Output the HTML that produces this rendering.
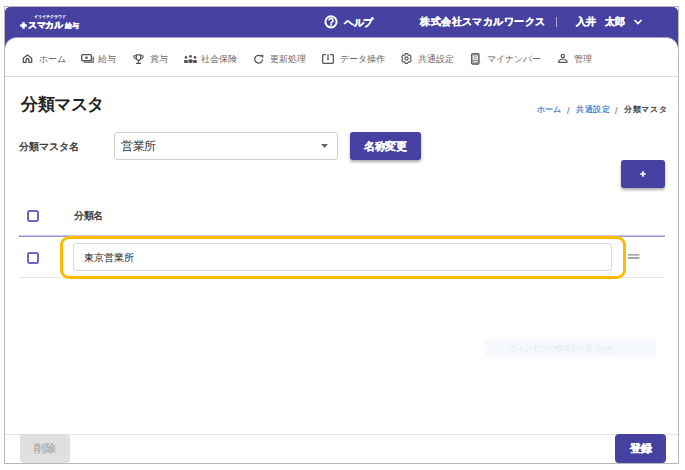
<!DOCTYPE html>
<html><head><meta charset="utf-8">
<style>
*{margin:0;padding:0;box-sizing:border-box;}
html,body{width:685px;height:470px;background:#fff;overflow:hidden;font-family:"Liberation Sans",sans-serif;position:relative;}
.a{position:absolute;}
i{font-style:normal;display:inline-block;width:calc(1em + var(--ls,0px));text-align:center;}
.t{position:absolute;white-space:nowrap;line-height:1;}
#frame{left:4px;top:6px;width:675px;height:458px;border:1px solid #b9b9b9;}
#hdr{left:5px;top:7px;width:673px;height:44px;background:#4741a1;border-radius:5px 5px 0 0;}
#body{left:5px;top:37px;width:673px;height:426px;background:#fff;border-radius:12px 12px 0 0;border-top:1px solid #a3a0d0;}
.nav{color:#666;font-size:9px;}

.nav svg{position:absolute;}
.pbtn{background:#4741a1;border-radius:3px;color:#fff;font-weight:bold;}
.cb{width:12px;height:12px;border:2px solid #6e68bf;border-radius:2.5px;}
</style></head>
<body>
<div id="hdr" class="a"></div>
<div id="body" class="a"></div>

<!-- header content -->
<div class="t" style="left:34px;top:15px;font-size:4px;color:#fff;-webkit-text-stroke:0.2px #fff;"><i>イ</i><i>リ</i><i>イ</i><i>チ</i><i>ク</i><i>ラ</i><i>ウ</i><i>ド</i></div>
<svg class="a" style="left:19.5px;top:22px" width="7" height="7" viewBox="0 0 7 7"><path d="M3.5 0.2v6.6M0.2 3.5h6.6" stroke="#fff" stroke-width="2.6"/></svg>
<div class="t" style="left:28px;top:21px;font-size:8.6px;color:#fff;font-weight:bold;--ls:0.1px;-webkit-text-stroke:0.4px #fff;"><i>ス</i><i>マ</i><i>カ</i><i>ル</i></div>
<div class="t" style="left:64.5px;top:21.5px;font-size:7.4px;color:#fff;font-weight:bold;-webkit-text-stroke:0.25px #fff;"><i>給</i><i>与</i></div>

<svg class="a" style="left:324px;top:15px" width="14" height="14" viewBox="0 0 14 14"><circle cx="7" cy="6.8" r="5.6" fill="none" stroke="#fff" stroke-width="2"/><path d="M5 5.4a2 2 0 1 1 2.8 1.8c-.6.3-.8.6-.8 1.1v.5" fill="none" stroke="#fff" stroke-width="1.6"/><circle cx="7" cy="10" r=".95" fill="#fff"/></svg>
<div class="t" style="left:344px;top:17.5px;font-size:9.5px;color:#fff;font-weight:bold;-webkit-text-stroke:0.3px #fff;"><i>ヘ</i><i>ル</i><i>プ</i></div>
<div class="t" style="left:420px;top:17px;font-size:10px;--ls:0.45px;-webkit-text-stroke:0.3px #fff;color:#fff;font-weight:bold;"><i>株</i><i>式</i><i>会</i><i>社</i><i>ス</i><i>マ</i><i>カ</i><i>ル</i><i>ワ</i><i>ー</i><i>ク</i><i>ス</i></div>
<div class="a" style="left:556px;top:17px;width:1px;height:10px;background:#a9a6d6;"></div>
<div class="t" style="left:575.5px;top:17px;font-size:10px;color:#fff;font-weight:bold;-webkit-text-stroke:0.3px #fff;"><i>入</i><i>井</i></div>
<div class="t" style="left:605px;top:17px;font-size:10px;color:#fff;font-weight:bold;-webkit-text-stroke:0.3px #fff;"><i>太</i><i>郎</i></div>
<svg class="a" style="left:633px;top:18px" width="10" height="8" viewBox="0 0 10 8"><path d="M1.5 2l3.5 3.5L8.5 2" fill="none" stroke="#fff" stroke-width="1.6"/></svg>

<!-- nav -->
<div class="nav">
<svg style="left:22px;top:54px" width="11" height="9" viewBox="0 0 11 9"><path d="M1.3 4.3L5.5 .9l4.2 3.4V8.4H6.9V5.9a1.4 1.4 0 0 0-2.8 0v2.5H1.3z" fill="none" stroke="#555" stroke-width="1.3" stroke-linejoin="round"/></svg>
<div class="t" style="left:39px;top:55px;"><i>ホ</i><i>ー</i><i>ム</i></div>
<svg style="left:81px;top:54px" width="13" height="9" viewBox="0 0 13 9"><rect x=".7" y=".7" width="9.6" height="6" rx=".8" fill="none" stroke="#555" stroke-width="1.3"/><path d="M12.2 2.6v5.6H2.6" fill="none" stroke="#555" stroke-width="1.2"/><circle cx="5.5" cy="3.7" r="1.3" fill="#555"/></svg>
<div class="t" style="left:98px;top:55px;"><i>給</i><i>与</i></div>
<svg style="left:133px;top:53.5px" width="11" height="11" viewBox="0 0 11 11"><path d="M3.3 .8h4.4v3.4a2.2 2.2 0 0 1-4.4 0z" fill="none" stroke="#555" stroke-width="1.2"/><path d="M3.3 1.8H1a2.3 2.3 0 0 0 2.5 3M7.7 1.8H10a2.3 2.3 0 0 1-2.5 3" fill="none" stroke="#555" stroke-width="1.1"/><path d="M5.5 6.4v2.6M3 9.4h5" stroke="#555" stroke-width="1.2"/></svg>
<div class="t" style="left:150px;top:55px;"><i>賞</i><i>与</i></div>
<svg style="left:184px;top:54.5px" width="13" height="8" viewBox="0 0 13 8"><circle cx="6.5" cy="1.4" r="1.4" fill="#555"/><circle cx="2" cy="2.4" r="1.3" fill="#555"/><circle cx="11" cy="2.4" r="1.3" fill="#555"/><rect x="4.4" y="4.2" width="4.2" height="3.8" rx="1.2" fill="#555"/><rect x="0" y="4.9" width="4" height="3.1" rx="1.1" fill="#555"/><rect x="9" y="4.9" width="4" height="3.1" rx="1.1" fill="#555"/></svg>
<div class="t" style="left:201px;top:55px;"><i>社</i><i>会</i><i>保</i><i>険</i></div>
<svg style="left:254px;top:53.5px" width="10" height="10" viewBox="0 0 10 10"><path d="M8.6 5.3A3.9 3.9 0 1 1 7.3 2.3" fill="none" stroke="#555" stroke-width="1.3"/><path d="M5.8 .9L9.3 .7 9.2 4.3z" fill="#555"/></svg>
<div class="t" style="left:270px;top:55px;"><i>更</i><i>新</i><i>処</i><i>理</i></div>
<svg style="left:322px;top:54px" width="12" height="10" viewBox="0 0 12 10"><path d="M3.8 .65H1.6a1 1 0 0 0-1 1v6.7a1 1 0 0 0 1 1h8.8a1 1 0 0 0 1-1V1.65a1 1 0 0 0-1-1H8.2" fill="none" stroke="#555" stroke-width="1.3"/><path d="M6 0v5.4" stroke="#555" stroke-width="1.2"/><path d="M4.6 4.6L6 6.2l1.4-1.6z" fill="#555"/></svg>
<div class="t" style="left:340px;top:55px;"><i>デ</i><i>ー</i><i>タ</i><i>操</i><i>作</i></div>
<svg style="left:401px;top:53px" width="11" height="11" viewBox="0 0 11 11"><path d="M7.35 2.30 L6.69 0.64 L4.31 0.64 L3.65 2.30 L1.82 2.09 L0.73 3.95 L1.80 5.50 L0.73 7.05 L1.82 8.91 L3.65 8.70 L4.31 10.36 L6.69 10.36 L7.35 8.70 L9.18 8.91 L10.27 7.05 L9.20 5.50 L10.27 3.95 L9.18 2.09Z" fill="none" stroke="#555" stroke-width="1.1" stroke-linejoin="round"/><circle cx="5.5" cy="5.5" r="1.6" fill="none" stroke="#555" stroke-width="1.1"/></svg>
<div class="t" style="left:418px;top:55px;"><i>共</i><i>通</i><i>設</i><i>定</i></div>
<svg style="left:471px;top:53px" width="9" height="12" viewBox="0 0 9 12"><rect x=".5" y=".5" width="7.6" height="10.8" rx="1" fill="#8c8c8c" stroke="#5c5c5c" stroke-width="1"/><rect x="1.7" y="2.5" width="5.2" height="4.3" fill="#fafafa"/><circle cx="4.3" cy="4.6" r="1.2" fill="none" stroke="#777" stroke-width=".8"/><rect x="1.8" y="8.2" width="5" height="1.1" fill="#eee"/></svg>
<div class="t" style="left:487px;top:55px;"><i>マ</i><i>イ</i><i>ナ</i><i>ン</i><i>バ</i><i>ー</i></div>
<svg style="left:558px;top:54px" width="10" height="9" viewBox="0 0 10 9"><circle cx="4.8" cy="2" r="1.6" fill="none" stroke="#555" stroke-width="1.2"/><path d="M.7 8.3a.5.5 0 0 1-.1-.7C1.3 6.2 3 5 4.8 5s3.5 1.2 4.2 2.6a.5.5 0 0 1-.1.7z" fill="none" stroke="#555" stroke-width="1.2" stroke-linejoin="round"/></svg>
<div class="t" style="left:574px;top:55px;"><i>管</i><i>理</i></div>
</div>
<div class="a" style="left:5px;top:76px;width:673px;height:1px;background:#dcdcdc;"></div>

<!-- title & breadcrumb -->
<div class="t" style="left:21px;top:96px;font-size:16.5px;font-weight:bold;color:#222;"><i>分</i><i>類</i><i>マ</i><i>ス</i><i>タ</i></div>
<div class="t" style="left:537px;top:106px;font-size:8px;color:#3b7cc6;-webkit-text-stroke:0.2px #3b7cc6;--ls:0.1px;"><i>ホ</i><i>ー</i><i>ム</i></div>
<div class="t" style="left:567px;top:106.5px;font-size:9px;color:#666;">/</div>
<div class="t" style="left:576px;top:106px;font-size:8px;color:#3b7cc6;-webkit-text-stroke:0.2px #3b7cc6;--ls:0.6px;"><i>共</i><i>通</i><i>設</i><i>定</i></div>
<div class="t" style="left:615px;top:106.5px;font-size:9px;color:#666;">/</div>
<div class="t" style="left:624px;top:106px;font-size:8px;color:#333;-webkit-text-stroke:0.25px #333;--ls:0.6px;"><i>分</i><i>類</i><i>マ</i><i>ス</i><i>タ</i></div>

<!-- form row -->
<div class="t" style="left:19px;top:142px;font-size:10px;color:#333;-webkit-text-stroke:0.35px #333;"><i>分</i><i>類</i><i>マ</i><i>ス</i><i>タ</i><i>名</i></div>
<div class="a" style="left:114px;top:132px;width:224px;height:28px;border:1px solid #cfcfcf;border-radius:3px;"></div>
<div class="t" style="left:121px;top:141px;font-size:11.5px;color:#333;"><i>営</i><i>業</i><i>所</i></div>
<svg class="a" style="left:321px;top:144px" width="7" height="4" viewBox="0 0 7 4"><path d="M0 0h7L3.5 4z" fill="#666"/></svg>
<div class="a pbtn" style="left:350px;top:132px;width:71px;height:28px;box-shadow:0 2px 3px rgba(0,0,0,.33);"></div>
<div class="t" style="left:364px;top:141px;font-size:10.6px;color:#fff;font-weight:bold;-webkit-text-stroke:0.15px #fff;"><i>名</i><i>称</i><i>変</i><i>更</i></div>

<!-- plus button -->
<div class="a pbtn" style="left:621px;top:160px;width:44px;height:28px;box-shadow:0 2px 3px rgba(0,0,0,.33);"></div>
<svg class="a" style="left:640px;top:171px" width="6" height="6" viewBox="0 0 6 6"><path d="M3 0.2v5.6M0.2 3h5.6" stroke="#fff" stroke-width="1.7"/></svg>

<!-- table header -->
<div class="a cb" style="left:27px;top:210px;"></div>
<div class="t" style="left:74px;top:211px;font-size:9.5px;color:#333;-webkit-text-stroke:0.35px #333;"><i>分</i><i>類</i><i>名</i></div>
<div class="a" style="left:19px;top:235px;width:646px;height:2px;background:linear-gradient(#cdc9ea 50%,#9893d0 50%);"></div>

<!-- row -->
<div class="a cb" style="left:27px;top:252px;"></div>
<div class="a" style="left:20px;top:277px;width:645px;height:1px;background:#e6e6e6;"></div>
<div class="a" style="left:60px;top:236px;width:566px;height:43px;border:3px solid #fcbb00;border-radius:9px;"></div>
<div class="a" style="left:73px;top:243px;width:539px;height:28px;border:1px solid #d9d9d9;border-radius:3px;"></div>
<div class="t" style="left:84px;top:253px;font-size:10px;color:#222;"><i>東</i><i>京</i><i>営</i><i>業</i><i>所</i></div>
<svg class="a" style="left:628px;top:253px" width="12" height="7" viewBox="0 0 12 7"><path d="M0 1.8h11.4M0 5h11.4" stroke="#888" stroke-width="1.3"/></svg>

<!-- tooltip -->
<div class="a" style="left:485px;top:340px;width:171px;height:17px;background:#f6f9fd;"></div>
<div class="t" style="left:509px;top:345px;font-size:7.6px;color:#e4e8ee;"><i>ウ</i><i>ィ</i><i>ン</i><i>ド</i><i>ウ</i><i>の</i><i>領</i><i>域</i><i>切</i><i>り</i><i>取</i><i>り</i>(W)</div>

<!-- footer -->
<div class="a" style="left:5px;top:434px;width:673px;height:1px;background:#e3e3e3;"></div>
<div class="a" style="left:20px;top:434px;width:50px;height:29px;background:#e0e0e0;border-radius:4px;"></div>
<div class="t" style="left:34px;top:443px;font-size:11px;color:#a8a8a8;-webkit-text-stroke:0.25px #a8a8a8;"><i>削</i><i>除</i></div>
<div class="a pbtn" style="left:615px;top:434px;width:51px;height:29px;border-radius:4px;"></div>
<div class="t" style="left:630px;top:443px;font-size:11px;color:#fff;font-weight:bold;-webkit-text-stroke:0.35px #fff;"><i>登</i><i>録</i></div>

<div id="frame" class="a"></div>
</body></html>
